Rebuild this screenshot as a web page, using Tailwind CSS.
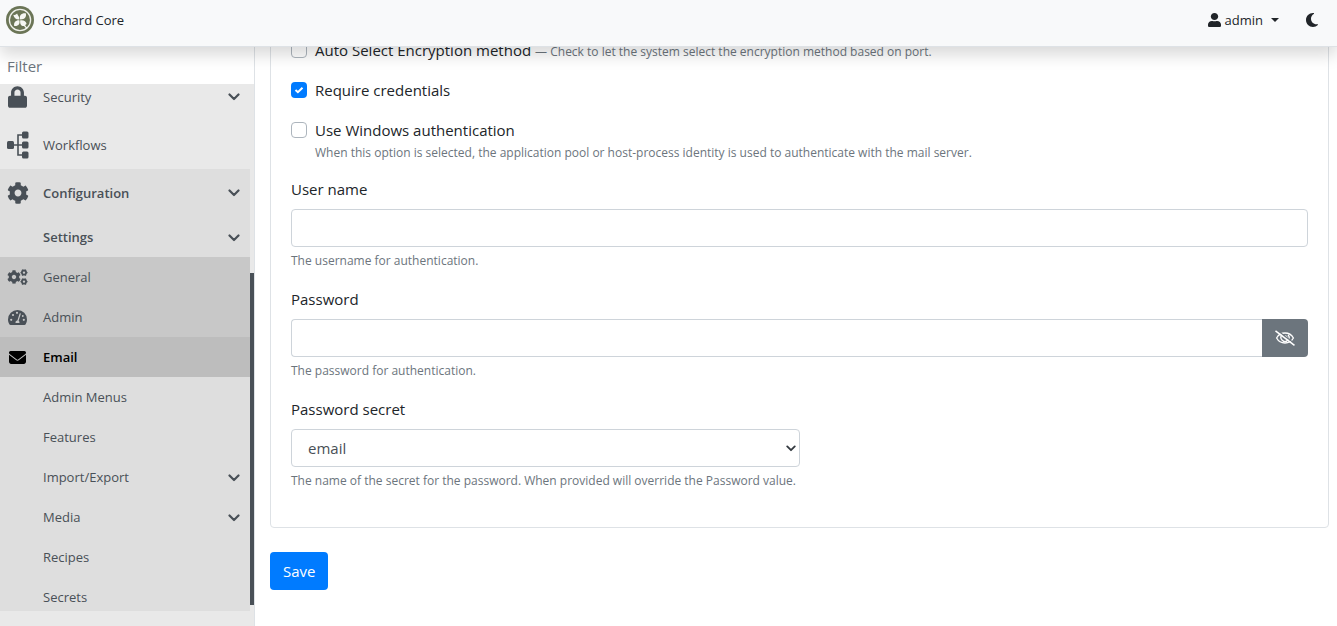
<!DOCTYPE html>
<html lang="en">

<head>
    <meta charset="UTF-8">
    <meta name="viewport" content="width=device-width, initial-scale=1.0">
    <title>Orchard Core</title>
    <script src="https://cdn.jsdelivr.net/npm/@tailwindcss/browser@4"></script>
</head>

<body class="flex h-screen flex-col overflow-hidden bg-white font-['Open_Sans',sans-serif] text-[15px] leading-6 text-[#212529]">
    <!-- icon sprites -->
    <svg class="hidden">
        <symbol id="cog" viewBox="0 0 512 512">
            <path d="M487.4 315.7l-42.6-24.6c4.3-23.2 4.3-47 0-70.2l42.6-24.6c4.9-2.8 7.1-8.6 5.5-14-11.1-35.6-30-67.8-54.7-94.6-3.8-4.1-10-5.1-14.8-2.3L380.8 110c-17.9-15.4-38.5-27.3-60.8-35.1V25.8c0-5.6-3.9-10.5-9.4-11.7-36.7-8.2-74.3-7.8-109.2 0-5.5 1.2-9.4 6.1-9.4 11.7V75c-22.2 7.9-42.8 19.8-60.8 35.1L88.7 85.5c-4.9-2.8-11-1.9-14.8 2.3-24.7 26.7-43.6 58.9-54.7 94.6-1.7 5.4.6 11.2 5.5 14L67.3 221c-4.3 23.2-4.3 47 0 70.2l-42.6 24.6c-4.9 2.8-7.1 8.6-5.5 14 11.1 35.6 30 67.8 54.7 94.6 3.8 4.1 10 5.1 14.8 2.3l42.6-24.6c17.9 15.4 38.5 27.3 60.8 35.1v49.2c0 5.6 3.9 10.5 9.4 11.7 36.7 8.2 74.3 7.8 109.2 0 5.5-1.2 9.4-6.1 9.4-11.7v-49.2c22.2-7.9 42.8-19.8 60.8-35.1l42.6 24.6c4.9 2.8 11 1.9 14.8-2.3 24.7-26.7 43.6-58.9 54.7-94.6 1.5-5.5-.7-11.3-5.6-14.1zM256 336c-44.1 0-80-35.9-80-80s35.9-80 80-80 80 35.9 80 80-35.9 80-80 80z" />
        </symbol>
        <symbol id="chevron" viewBox="0 0 12 8">
            <path d="M1.5 1.5 6 6l4.5-4.5" fill="none" stroke="currentColor" stroke-width="2.2" stroke-linecap="round" stroke-linejoin="round" />
        </symbol>
    </svg>

    <header class="relative z-10 flex h-[47px] shrink-0 items-center justify-between border-b border-[#dee2e6] bg-[#f8f9fa] pr-[19px] pl-[6px] pb-[6px] text-[13px] shadow-[0_8px_16px_rgba(0,0,0,0.15)]">
        <a href="#" class="flex items-center gap-2">
            <svg class="size-7" viewBox="0 0 28 28">
                <circle cx="14" cy="14" r="14" fill="#6b7556" />
                <circle cx="14" cy="14" r="10.6" fill="none" stroke="#eef0ea" stroke-width="1.3" />
                <g fill="#f6f7f3">
                    <path d="M13.4 13.6C10 13.800 8 12.200 7.300 8.800c2.100.6 2.700-.5 3.800-1.200.4 1.700 2.500 2.800 2.300 6z" />
                    <path d="M14.200 13.400c-1.200-3.800.6-6.400 5.600-6.200 1 3.900-1.200 6.400-5.600 6.200z" />
                    <path d="M13.400 14.200c.8 3.900-1.300 6.200-5.200 5.700-.7-3.600 1.400-5.900 5.200-5.700z" />
                    <path d="M14.200 14.200c3.600-.4 6 .8 6.400 3.800-.7.300-1.200.8-1.400 1.500l2.400 2.600-1 .9-2.600-2.900c-2.900.2-4.200-2-3.800-5.900z" />
                </g>
            </svg>
            Orchard Core
        </a>
        <div class="flex items-center gap-[27px]">
            <button type="button" class="flex items-center gap-1">
                <svg class="h-[14px] w-[13px]" viewBox="0 0 448 512" preserveAspectRatio="none" fill="currentColor">
                    <path d="M224 256c70.7 0 128-57.3 128-128S294.7 0 224 0 96 57.3 96 128s57.3 128 128 128zm89.6 32h-16.7c-22.2 10.2-46.9 16-72.9 16s-50.6-5.8-72.9-16h-16.7C60.2 288 0 348.2 0 422.4V464c0 26.5 21.5 48 48 48h352c26.5 0 48-21.5 48-48v-41.6c0-74.2-60.2-134.4-134.4-134.4z" />
                </svg>
                admin
                <svg class="ml-1 h-1 w-2" viewBox="0 0 8 4" fill="currentColor"><path d="M0 0h8L4 4z" /></svg>
            </button>
            <button type="button" aria-label="Theme">
                <svg class="h-4 w-3" viewBox="0 0 384 512" fill="currentColor">
                    <path d="M223.5 32C100 32 0 132.3 0 256S100 480 223.5 480c60.6 0 115.5-24.2 155.8-63.4c5-4.9 6.3-12.5 3.1-18.7s-10.1-9.7-17-8.5c-9.8 1.7-19.8 2.6-30.1 2.6c-96.9 0-175.5-78.8-175.5-176c0-65.8 36-123.1 89.3-153.3c6.1-3.5 9.2-10.5 7.7-17.3s-7.3-11.9-14.3-12.5c-6.3-.5-12.6-.8-19-.8z" />
                </svg>
            </button>
        </div>
    </header>

    <div class="flex min-h-0 flex-1">
        <aside class="flex w-[255px] shrink-0 flex-col border-r border-[#dee2e6] bg-[#e9e9e9] text-[#495057]">
            <input type="text" placeholder="Filter" aria-label="Filter" class="h-[37px] shrink-0 bg-white px-[7px] text-[15px] outline-none placeholder:text-[#6c757d]">
            <nav class="relative mb-[15px] min-h-0 flex-1 overflow-hidden text-[13px]">
                <ul class="-mt-[11px]">
                    <li>
                        <a href="#" class="flex h-12 items-center pr-[14px] pl-2">
                            <span class="flex w-[35px] shrink-0">
                                <svg class="h-[22px] w-[19px]" viewBox="0 0 448 512" fill="currentColor">
                                    <path d="M400 224h-24v-72C376 68.2 307.8 0 224 0S72 68.2 72 152v72H48c-26.5 0-48 21.5-48 48v192c0 26.500 21.500 48 48 48h352c26.500 0 48-21.500 48-48V272c0-26.500-21.500-48-48-48zm-104 0H152v-72c0-39.700 32.300-72 72-72s72 32.300 72 72v72z" />
                                </svg>
                            </span>
                            <span class="flex-1">Security</span>
                            <svg class="h-2 w-3"><use href="#chevron" /></svg>
                        </a>
                    </li>
                    <li>
                        <a href="#" class="flex h-12 items-center pr-[14px] pl-[7px]">
                            <span class="flex w-9 shrink-0">
                                <svg class="h-7 w-[22px]" viewBox="0 0 22 28" fill="currentColor">
                                    <rect y="10" width="7" height="8" rx="1.5" />
                                    <rect x="15" y=".5" width="6.500" height="7" rx="1.5" />
                                    <rect x="15" y="10.5" width="6.500" height="7" rx="1.5" />
                                    <rect x="15" y="20.5" width="6.500" height="7" rx="1.5" />
                                    <path d="M6 14h10M16 4h-5v20h5" fill="none" stroke="currentColor" stroke-width="1.6" />
                                </svg>
                            </span>
                            <span class="flex-1">Workflows</span>
                        </a>
                    </li>
                    <li class="mr-1 rounded-b bg-[#dedede]">
                        <a href="#" class="flex h-12 items-center pr-[10px] pl-[7px] font-semibold">
                            <span class="flex w-9 shrink-0">
                                <svg class="size-[22px]" fill="currentColor"><use href="#cog" /></svg>
                            </span>
                            <span class="flex-1">Configuration</span>
                            <svg class="h-2 w-3"><use href="#chevron" /></svg>
                        </a>
                        <ul>
                            <li>
                                <a href="#" class="flex h-10 items-center pr-[10px] pl-[43px] font-semibold">
                                    <span class="flex-1">Settings</span>
                                    <svg class="mt-[2px] h-2 w-3"><use href="#chevron" /></svg>
                                </a>
                                <ul class="bg-[#c8c8c8]">
                                    <li>
                                        <a href="#" class="flex h-10 items-center pl-[7px]">
                                            <span class="flex w-9 shrink-0">
                                                <svg class="h-4 w-[21px]" viewBox="0 0 21 16" fill="currentColor">
                                                    <use href="#cog" x="0" y="1" width="14" height="14" />
                                                    <g fill="none" stroke="currentColor" stroke-width="1.8">
                                                        <circle cx="17" cy="3.6" r="2.1" />
                                                        <circle cx="17" cy="12.6" r="2.1" />
                                                    </g>
                                                    <g stroke="currentColor" stroke-width="1.4">
                                                        <path d="M13.500 3.600h1M19.500 3.600h1M15.300.6l.5.900M18.700.6l-.5.900M15.300 6.600l.5-.9M18.700 6.600l-.5-.9" />
                                                        <path d="M13.500 12.600h1M19.500 12.600h1M15.300 9.600l.5.900M18.700 9.600l-.5.900M15.300 15.600l.5-.9M18.700 15.600l-.5-.9" />
                                                    </g>
                                                </svg>
                                            </span>
                                            General
                                        </a>
                                    </li>
                                    <li>
                                        <a href="#" class="flex h-10 items-center pl-2">
                                            <span class="flex w-[35px] shrink-0">
                                                <svg class="h-[15px] w-[19px]" viewBox="0 0 19 15">
                                                    <path d="M9.5 0A9.5 9.5 0 0 0 0 9.5c0 1.7.5 3.3 1.3 4.7.3.5.8.8 1.3.8h13.8c.5 0 1-.3 1.3-.8.8-1.4 1.3-3 1.3-4.7A9.5 9.5 0 0 0 9.5 0z" fill="currentColor" />
                                                    <g fill="#c8c8c8">
                                                        <circle cx="3.2" cy="9.8" r="1.1" />
                                                        <circle cx="5" cy="5" r="1.1" />
                                                        <circle cx="9" cy="2.8" r="1.1" />
                                                        <circle cx="15.8" cy="9.8" r="1.1" />
                                                        <circle cx="14.8" cy="6" r=".9" />
                                                    </g>
                                                    <path d="m12.2 3.8-2.4 7.4" stroke="#c8c8c8" stroke-width="1.2" stroke-linecap="round" />
                                                    <path d="M7.6 13a2 2 0 1 1 3.8 0z" fill="#c8c8c8" />
                                                </svg>
                                            </span>
                                            Admin
                                        </a>
                                    </li>
                                    <li>
                                        <a href="#" class="flex h-10 items-center bg-[#bdbdbd] pl-[9px] font-semibold text-black">
                                            <span class="flex w-[34px] shrink-0">
                                                <svg class="h-[13px] w-[17px]" viewBox="0 64 512 384" preserveAspectRatio="none" fill="currentColor">
                                                    <path d="M48 64C21.5 64 0 85.5 0 112c0 15.1 7.1 29.3 19.2 38.4L236.8 313.6c11.4 8.5 27 8.5 38.4 0L492.8 150.4c12.1-9.1 19.2-23.3 19.2-38.4c0-26.5-21.5-48-48-48H48zM0 176V384c0 35.3 28.7 64 64 64H448c35.3 0 64-28.7 64-64V176L294.4 339.2c-22.8 17.1-54 17.1-76.8 0L0 176z" />
                                                </svg>
                                            </span>
                                            Email
                                        </a>
                                    </li>
                                </ul>
                            </li>
                            <li><a href="#" class="flex h-10 items-center pl-[43px]">Admin Menus</a></li>
                            <li><a href="#" class="flex h-10 items-center pl-[43px]">Features</a></li>
                            <li>
                                <a href="#" class="flex h-10 items-center pr-[10px] pl-[43px]">
                                    <span class="flex-1">Import/Export</span>
                                    <svg class="mt-[2px] h-2 w-3"><use href="#chevron" /></svg>
                                </a>
                            </li>
                            <li>
                                <a href="#" class="flex h-10 items-center pr-[10px] pl-[43px]">
                                    <span class="flex-1">Media</span>
                                    <svg class="mt-[2px] h-2 w-3"><use href="#chevron" /></svg>
                                </a>
                            </li>
                            <li><a href="#" class="flex h-10 items-center pl-[43px]">Recipes</a></li>
                            <li><a href="#" class="flex h-10 items-center pl-[43px]">Secrets</a></li>
                        </ul>
                    </li>
                </ul>
                <!-- scrollbar thumb -->
                <div class="absolute top-[189px] right-0 bottom-[6px] w-1 bg-[#495057]"></div>
            </nav>
        </aside>

        <main class="min-w-0 flex-1 overflow-hidden pr-2 pl-[15px]">
            <form>
                <div class="-mt-[30px] rounded border border-[#dee2e6] p-5">
                    <div class="mb-4 flex items-center gap-2">
                        <input type="checkbox" id="autoSelect" class="size-4 appearance-none rounded border border-[#adb5bd] bg-white">
                        <div class="flex items-baseline gap-1">
                            <label for="autoSelect">Auto Select Encryption method</label>
                            <span class="text-xs text-[#6c757d]">— Check to let the system select the encryption method based on port.</span>
                        </div>
                    </div>
                    <div class="mb-4 flex items-center gap-2">
                        <span class="grid size-4">
                            <input type="checkbox" id="requireCredentials" checked class="col-start-1 row-start-1 size-4 appearance-none rounded bg-[#007bff]">
                            <svg class="pointer-events-none col-start-1 row-start-1 size-4" viewBox="0 0 16 16" fill="none" stroke="#fff" stroke-width="2">
                                <path d="m4.5 8 2.4 2.2 4.600-4.400" />
                            </svg>
                        </span>
                        <label for="requireCredentials">Require credentials</label>
                    </div>
                    <div class="flex items-center gap-2">
                        <input type="checkbox" id="windowsAuth" class="size-4 appearance-none rounded border border-[#adb5bd] bg-white">
                        <label for="windowsAuth">Use Windows authentication</label>
                    </div>
                    <p class="mb-[13px] pl-6 text-xs leading-[22px] text-[#6c757d]">When this option is selected, the application pool or host-process identity is used to authenticate with the mail server.</p>

                    <div class="mb-4">
                        <label for="userName" class="mb-2 block">User name</label>
                        <input type="text" id="userName" class="block h-[38px] w-full rounded border border-[#ced4da] px-3">
                        <p class="mt-1 text-xs leading-5 text-[#6c757d]">The username for authentication.</p>
                    </div>

                    <div class="mb-4">
                        <label for="password" class="mb-2 block">Password</label>
                        <div class="flex h-[38px]">
                            <input type="password" id="password" class="min-w-0 flex-1 rounded-l border border-r-0 border-[#ced4da] px-3">
                            <button type="button" aria-label="Show password" class="flex w-[46px] items-center justify-center rounded-r bg-[#6c757d] text-white">
                                <svg class="h-4 w-5" viewBox="0 0 20 16" fill="none" stroke="currentColor" stroke-width="1.3">
                                    <path d="M1.6 8C3.400 4.700 6.400 3 10 3s6.600 1.700 8.400 5c-1.800 3.300-4.800 5-8.400 5S3.400 11.300 1.600 8z" />
                                    <path d="M7 4.800a4 4 0 1 0 6 0" />
                                    <path d="M10 6a2 2 0 0 1 2 2.500" />
                                    <path d="M1.500-.2 20.500 14.300" stroke="#6c757d" />
                                    <path d="M.5.8 19.500 15.300" stroke-width="1.500" />
                                </svg>
                            </button>
                        </div>
                        <p class="mt-1 text-xs leading-5 text-[#6c757d]">The password for authentication.</p>
                    </div>

                    <div class="mb-4">
                        <label for="passwordSecret" class="mb-2 block">Password secret</label>
                        <div class="grid w-1/2 items-center">
                            <select id="passwordSecret" class="col-start-1 row-start-1 h-[38px] appearance-none rounded border border-[#ced4da] bg-white px-4 text-[#495057]">
                                <option>email</option>
                            </select>
                            <svg class="pointer-events-none col-start-1 row-start-1 mr-1 h-[7px] w-[10px] justify-self-end text-[#343a40]"><use href="#chevron" /></svg>
                        </div>
                        <p class="mt-1 text-xs leading-5 text-[#6c757d]">The name of the secret for the password. When provided will override the Password value.</p>
                    </div>
                </div>
                <button type="submit" class="mt-6 h-[38px] rounded bg-[#007bff] px-[13px] text-white">Save</button>
            </form>
        </main>
    </div>
</body>

</html>
